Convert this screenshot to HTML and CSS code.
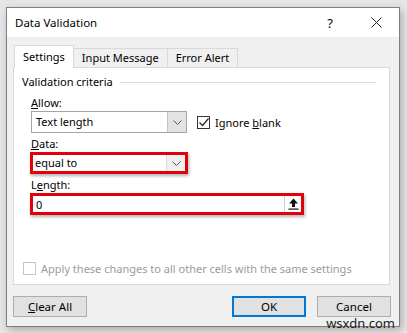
FILE: index.html
```html
<!DOCTYPE html>
<html lang="en">
<head>
    <meta charset="UTF-8">
    <title>Data Validation</title>
    <link rel="stylesheet" href="styles.css">
</head>
<body>
    <div id="dialog">
        <div id="title-bar">
            <span id="title-text">Data Validation</span>
            <span class="title-btn help">?</span>
            <span class="title-btn close">
                <svg width="11" height="11" viewBox="0 0 11 11"><path d="M0.5 0.5 L10.5 10.5 M10.5 0.5 L0.5 10.5" stroke="#222" stroke-width="1"/></svg>
            </span>
        </div>

        <div id="dialog-body">
            <div id="tabs">
                <div class="tab active">Settings</div>
                <div class="tab">Input Message</div>
                <div class="tab">Error Alert</div>
            </div>

            <div id="tab-panel">
                <div class="group-title">
                    <span>Validation criteria</span>
                    <div class="group-line"></div>
                </div>

                <div class="field-label"><u>A</u>llow:</div>
                <div class="row">
                    <div class="select allow-select">
                        <span class="select-value">Text length</span>
                        <span class="select-arrow gray">
                            <svg width="9" height="5" viewBox="0 0 9 5"><path d="M0.5 0.5 L4.5 4.5 L8.5 0.5" fill="none" stroke="#555" stroke-width="1"/></svg>
                        </span>
                    </div>
                    <label class="check">
                        <span class="box checked">
                            <svg width="10" height="9" viewBox="0 0 10 9"><path d="M0.5 4.5 L3.5 7.5 L9.5 0.5" fill="none" stroke="#222" stroke-width="1.2"/></svg>
                        </span>
                        <span>Ignore <u>b</u>lank</span>
                    </label>
                </div>

                <div class="field-label"><u>D</u>ata:</div>
                <div class="highlight data-hl">
                    <div class="select data-select">
                        <span class="select-value">equal to</span>
                        <span class="select-arrow">
                            <svg width="9" height="5" viewBox="0 0 9 5"><path d="M0.5 0.5 L4.5 4.5 L8.5 0.5" fill="none" stroke="#555" stroke-width="1"/></svg>
                        </span>
                    </div>
                </div>

                <div class="field-label">L<u>e</u>ngth:</div>
                <div class="highlight length-hl">
                    <div class="text-input">
                        <span class="input-value">0</span>
                        <span class="ref-btn">
                            <svg width="11" height="12" viewBox="0 0 11 12"><path d="M5.5 0.5 L10 5.5 L7 5.5 L7 9 L4 9 L4 5.5 L1 5.5 Z" fill="#111"/><rect x="0.5" y="10.5" width="10" height="1.2" fill="#111"/></svg>
                        </span>
                    </div>
                </div>

                <label class="check disabled apply">
                    <span class="box"></span>
                    <span>Apply these changes to all other cells with the same settings</span>
                </label>
            </div>

            <div id="button-row">
                <button class="btn"><u>C</u>lear All</button>
                <div class="spacer"></div>
                <button class="btn default">OK</button>
                <button class="btn">Cancel</button>
            </div>
        </div>
    </div>
    <div id="watermark">wsxdn.com</div>
</body>
</html>
```

FILE: styles.css
```css
body {
    margin: 0;
    padding: 7px 0 0 6px;
    width: 407px;
    height: 333px;
    box-sizing: border-box;
    background-color: #e6e6e6;
    font-family: "Segoe UI", "Noto Sans", sans-serif;
    font-size: 11px;
    color: #000;
    overflow: hidden;
    position: relative;
}

#dialog {
    width: 394px;
    height: 320px;
    box-sizing: border-box;
    border: 1px solid #7f7f7f;
    background-color: #f0f0f0;
    box-shadow: 2px 3px 8px rgba(0, 0, 0, 0.25);
    display: flex;
    flex-direction: column;
}

#title-bar {
    height: 29px;
    background-color: #fff;
    display: flex;
    align-items: center;
    padding-left: 8px;
}

#title-text {
    flex: 1;
    font-size: 11.5px;
}

.title-btn {
    width: 46px;
    text-align: center;
    font-size: 13px;
}

.help {
    padding-left: 6px;
}

.close {
    display: flex;
    justify-content: center;
    align-items: center;
}

#dialog-body {
    flex: 1;
    padding: 8px 8px 0 6px;
    display: flex;
    flex-direction: column;
}

#tabs {
    display: flex;
    align-items: flex-end;
    padding-left: 1px;
    height: 22px;
    position: relative;
    z-index: 1;
}

.tab {
    height: 19px;
    box-sizing: border-box;
    border: 1px solid #d9d9d9;
    border-bottom: none;
    padding: 0 8px;
    line-height: 18px;
    background-color: #f0f0f0;
}

.tab + .tab {
    border-left: none;
}

.tab.active {
    height: 23px;
    margin-bottom: -1px;
    background-color: #fff;
    line-height: 22px;
    padding: 0 8px;
}

#tab-panel {
    height: 218px;
    width: 377px;
    box-sizing: border-box;
    background-color: #fff;
    border: 1px solid #d9d9d9;
    padding: 5px 8px 0 8px;
}

.group-title {
    display: flex;
    align-items: center;
    gap: 7px;
    height: 16px;
}

.group-line {
    flex: 1;
    height: 1px;
    background-color: #dcdcdc;
    margin-right: 5px;
    margin-top: 2px;
}

.field-label {
    margin-left: 9px;
    height: 16px;
    line-height: 16px;
}

.field-label:nth-of-type(2) {
    margin-top: 6px;
}

.row {
    display: flex;
    align-items: center;
    margin-left: 9px;
    margin-bottom: 3px;
}

.select {
    display: flex;
    height: 22px;
    box-sizing: border-box;
    border: 1px solid #a5a5a5;
    background-color: #fff;
}

.allow-select {
    width: 156px;
}

.select-value {
    flex: 1;
    padding-left: 4px;
    line-height: 20px;
}

.select-arrow {
    width: 18px;
    display: flex;
    align-items: center;
    justify-content: center;
    border-left: 1px solid #d9d9d9;
}

.select-arrow.gray {
    background-color: #e3e3e3;
    border-left: 1px solid #c4c4c4;
}

.check {
    display: flex;
    align-items: center;
    gap: 5px;
    margin-left: 10px;
}

.box {
    width: 13px;
    height: 13px;
    box-sizing: border-box;
    border: 1px solid #333;
    display: flex;
    align-items: center;
    justify-content: center;
    background-color: #fff;
}

.highlight {
    margin-left: 8px;
    border: 3px solid #e3000b;
    box-shadow: 1px 2px 3px rgba(0, 0, 0, 0.3);
    width: fit-content;
}

.data-hl {
    margin-bottom: 3px;
}

.data-select {
    width: 152px;
    height: 16px;
    border: none;
}

.data-select .select-value {
    line-height: 16px;
    padding-left: 2px;
}

.data-select .select-arrow {
    background-color: #f0f0f0;
}

.text-input {
    width: 268px;
    height: 16px;
    display: flex;
    align-items: center;
    background-color: #fff;
}

.input-value {
    flex: 1;
    padding-left: 3px;
}

.ref-btn {
    width: 16px;
    height: 16px;
    display: flex;
    align-items: center;
    justify-content: center;
    border-left: 1px solid #d0d0d0;
    background-color: #fff;
}

.check.apply {
    margin-left: 1px;
    margin-top: 46px;
}

.check.disabled {
    color: #9b9b9b;
}

.check.disabled .box {
    border-color: #c6c6c6;
}

#button-row {
    display: flex;
    margin-top: 11px;
    gap: 11px;
}

.spacer {
    flex: 1;
}

.btn {
    width: 74px;
    height: 21px;
    box-sizing: border-box;
    border: 1px solid #adadad;
    background-color: #e1e1e1;
    font-family: inherit;
    font-size: 11.5px;
    padding: 0;
    color: #000;
}

.btn.default {
    border: 2px solid #0078d7;
}

#watermark {
    position: absolute;
    right: 12px;
    bottom: 1px;
    font-family: "Noto Sans", sans-serif;
    font-size: 13px;
    color: #222;
}
```
